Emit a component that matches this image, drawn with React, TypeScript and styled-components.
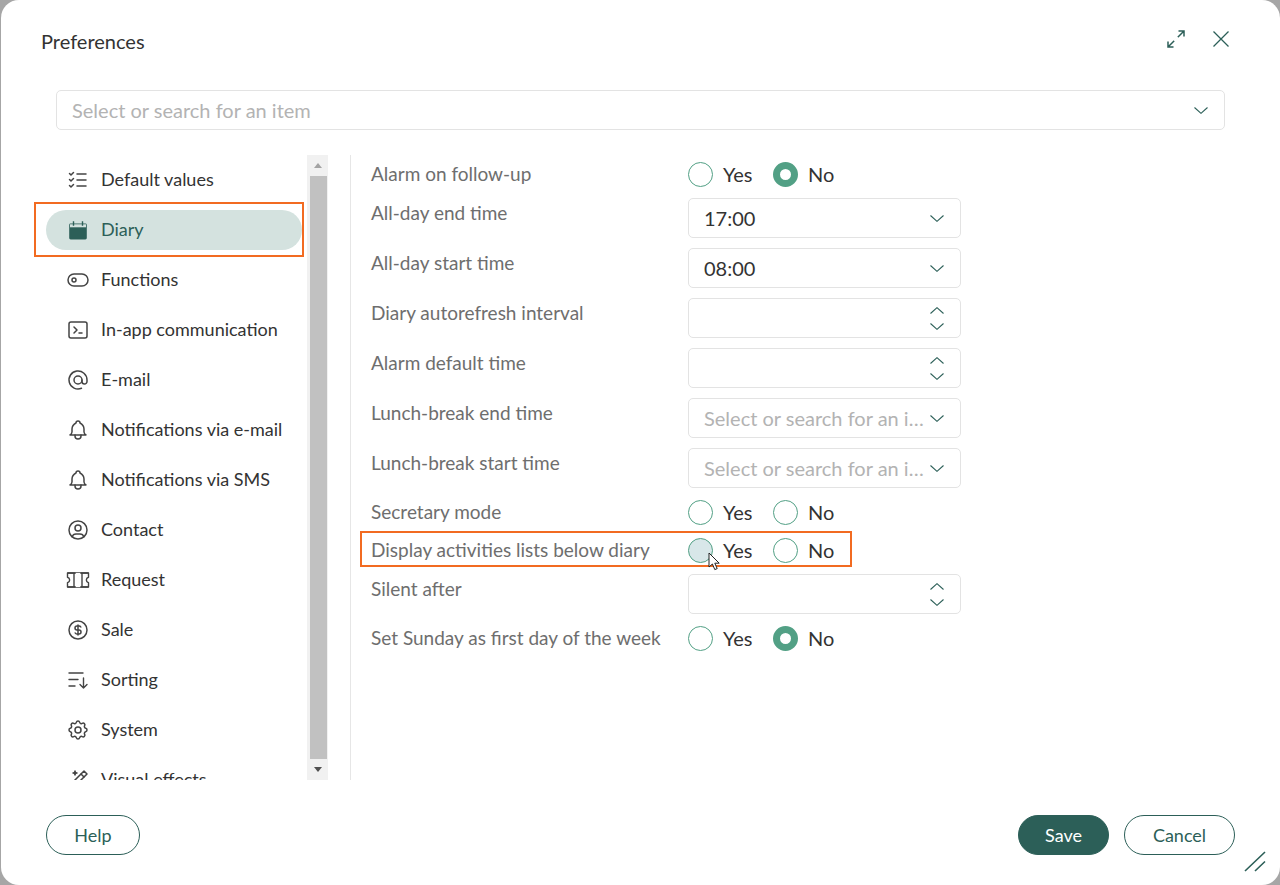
import React from "react";
import styled, { createGlobalStyle } from "styled-components";
import {
  TbListCheck, TbToggleLeft, TbTerminal2, TbAt, TbBell, TbUserCircle, TbCoin, TbSettings, TbWand,
} from "react-icons/tb";

const Global = createGlobalStyle`
  html, body { margin: 0; padding: 0; height: 100%; background: #a6a6a6; overflow: hidden; }
  * { box-sizing: border-box; }
  body { font-family: "Lato", "Liberation Sans", sans-serif; }
`;

const teal = "#2c5f58";
const orange = "#f26b21";

const Page = styled.div`
  width: 1280px;
  height: 885px;
  padding-left: 1px;
`;
const Modal = styled.div`
  width: 1279px;
  height: 885px;
  background: #fff;
  border-radius: 18px;
  display: flex;
  flex-direction: column;
`;
const Header = styled.div`
  height: 90px;
  flex: none;
  display: flex;
  align-items: flex-start;
  justify-content: space-between;
  padding: 26px 50px 0 40px;
`;
const Title = styled.div`
  font-size: 20px;
  line-height: 30px;
  color: #333;
`;
const HeaderIcons = styled.div`
  display: flex;
  gap: 26px;
  align-items: center;
  height: 26px;
`;
const IconButton = styled.span`
  display: flex;
  color: ${teal};
`;
const SearchRow = styled.div`
  flex: none;
  padding: 0 55px;
`;
const Field = styled.div<{ $full?: boolean }>`
  height: 40px;
  width: ${(p) => (p.$full ? "100%" : "273px")};
  border: 1px solid #e3e3e3;
  border-radius: 5px;
  background: #fff;
  display: flex;
  align-items: center;
  padding: 0 16px 0 15px;
`;
const FieldText = styled.span<{ $placeholder?: boolean }>`
  flex: 1;
  min-width: 0;
  font-size: 20px;
  line-height: 40px;
  color: ${(p) => (p.$placeholder ? "#b3b3b3" : "#333")};
  white-space: nowrap;
  overflow: hidden;
  text-overflow: ellipsis;
`;
const Stepper = styled.span`
  margin-left: auto;
  display: flex;
  flex-direction: column;
  gap: 9px;
  color: ${teal};
`;
const Chevron = styled.svg`
  display: block;
  flex: none;
  color: ${teal};
`;
const Body = styled.div`
  flex: none;
  height: 625px;
  margin-top: 25px;
  display: flex;
`;
const Nav = styled.nav`
  width: 306px;
  flex: none;
  height: 100%;
  overflow: hidden;
  padding: 5px 5px 0 45px;
`;
const NavItem = styled.div<{ $active?: boolean }>`
  position: relative;
  height: 40px;
  margin-bottom: 10px;
  border-radius: 20px;
  display: flex;
  align-items: center;
  gap: 11px;
  padding-left: 20px;
  font-size: 18px;
  color: ${(p) => (p.$active ? teal : "#333")};
  background: ${(p) => (p.$active ? "#d4e2df" : "transparent")};
  & > svg { flex: none; color: ${(p) => (p.$active ? teal : "#444")}; }
`;
const NavLabel = styled.span`
  position: relative;
  top: -1px;
`;
const Highlight = styled.span`
  position: absolute;
  border: 2px solid ${orange};
  pointer-events: none;
`;
const DiaryHighlight = styled(Highlight)`
  left: -12px;
  top: -8px;
  width: 270px;
  height: 55px;
`;
const Scrollbar = styled.div`
  width: 21px;
  flex: none;
  height: 100%;
  background: #f1f1f1;
  display: flex;
  flex-direction: column;
  align-items: center;
`;
const ScrollButton = styled.div`
  height: 21px;
  flex: none;
  display: flex;
  align-items: center;
  justify-content: center;
`;
const Arrow = styled.span<{ $down?: boolean }>`
  width: 0;
  height: 0;
  border-left: 4.5px solid transparent;
  border-right: 4.5px solid transparent;
  ${(p) => (p.$down ? "border-top: 5px solid #505050;" : "border-bottom: 5px solid #a3a3a3;")}
`;
const Thumb = styled.div`
  width: 17px;
  flex: 1;
  margin-left: 1px;
  background: #c1c1c1;
`;
const Divider = styled.div`
  width: 1px;
  flex: none;
  height: 100%;
  margin-left: 22px;
  background: #e6e6e6;
`;
const Form = styled.div`
  flex: 1;
  padding: 5px 0 0 20px;
  display: flex;
  flex-direction: column;
  gap: 10px;
`;
const Row = styled.div<{ $radio?: boolean }>`
  position: relative;
  display: grid;
  grid-template-columns: 317px 273px;
  height: ${(p) => (p.$radio ? "28px" : "40px")};
  align-items: ${(p) => (p.$radio ? "center" : "start")};
`;
const RowLabel = styled.div<{ $radio?: boolean }>`
  font-size: 19px;
  line-height: ${(p) => (p.$radio ? "28px" : "30px")};
  color: #6e6e6e;
  white-space: nowrap;
`;
const RowHighlight = styled(Highlight)`
  left: -11px;
  top: -5px;
  width: 492px;
  height: 36px;
`;
const RadioGroup = styled.div`
  display: flex;
  align-items: center;
`;
const RadioOption = styled.label`
  display: flex;
  align-items: center;
  font-size: 20px;
  color: #333;
  width: 85px;
  gap: 10px;
`;
const RadioDot = styled.span<{ $checked?: boolean; $hover?: boolean }>`
  position: relative;
  width: 25px;
  height: 25px;
  flex: none;
  border-radius: 50%;
  background: ${(p) => (p.$hover ? "#d8e7e9" : "#fff")};
  border: ${(p) => (p.$checked ? "7.5px" : "1px")} solid #52a085;
`;
const Cursor = styled.svg`
  position: absolute;
  left: 19px;
  top: 13px;
`;
const Footer = styled.div`
  flex: none;
  height: 105px;
  padding: 35px 45px 0;
  display: flex;
  align-items: flex-start;
  gap: 15px;
  position: relative;
`;
const Btn = styled.button<{ $primary?: boolean; $w: number }>`
  width: ${(p) => p.$w}px;
  height: 40px;
  border-radius: 20px;
  border: 1px solid ${teal};
  background: ${(p) => (p.$primary ? teal : "#fff")};
  color: ${(p) => (p.$primary ? "#fff" : teal)};
  font-family: inherit;
  font-size: 18px;
  padding: 0;
`;
const Spacer = styled.div`
  flex: 1;
`;
const Grip = styled.svg`
  position: absolute;
  right: 12px;
  bottom: 12px;
  color: ${teal};
`;

const Down = ({ w = 14, h = 7 }: { w?: number; h?: number }) => (
  <Chevron width={w} height={h} viewBox={`0 0 ${w} ${h}`} fill="none" stroke="currentColor" strokeWidth="1.1">
    <path d={`M0.5 0.5 L${w / 2} ${h - 0.7} L${w - 0.5} 0.5`} />
  </Chevron>
);
const Up = () => (
  <Chevron width={14} height={7} viewBox="0 0 14 7" fill="none" stroke="currentColor" strokeWidth="1.1">
    <path d="M0.5 6.5 L7 0.7 L13.5 6.5" />
  </Chevron>
);

const CalendarFilled = () => (
  <svg width="24" height="24" viewBox="0 0 24 24">
    <rect x="3.2" y="5.5" width="17.6" height="16" rx="1.4" fill={teal} />
    <rect x="4" y="6.3" width="16" height="3" fill="#d4e2df" />
    <path d="M7.5 3.2v4.5M16.5 3.2v4.5" stroke={teal} strokeWidth="1.4" fill="none" />
  </svg>
);
const TicketIcon = () => (
  <svg width="24" height="24" viewBox="0 0 24 24" fill="none" stroke="currentColor" strokeWidth="1.4" strokeLinejoin="round">
    <path d="M1.5 5h21v4.2a2.9 2.9 0 0 0 0 5.6V19h-21v-4.2a2.9 2.9 0 0 0 0-5.6z" />
    <path d="M8 5v14" />
    <path d="M16 5v14" />
    <path d="M12 5v14" stroke="#fff" strokeWidth="5" opacity="1" />
    <path d="M1.5 5h8M14.5 5h8M1.5 19h8M14.5 19h8" />
  </svg>
);
const SortIcon = () => (
  <svg width="24" height="24" viewBox="0 0 24 24" fill="none" stroke="currentColor" strokeWidth="1.4" strokeLinecap="round" strokeLinejoin="round">
    <path d="M3 5h14M3 11.5h9M3 18h6" />
    <path d="M17.5 10v10M14 16.5l3.5 3.5 3.5-3.5" />
  </svg>
);

const items: { label: string; icon: React.ReactNode; active?: boolean }[] = [
  { label: "Default values", icon: <TbListCheck size={24} strokeWidth={1.5} /> },
  { label: "Diary", icon: <CalendarFilled />, active: true },
  { label: "Functions", icon: <TbToggleLeft size={24} strokeWidth={1.5} /> },
  { label: "In-app communication", icon: <TbTerminal2 size={24} strokeWidth={1.5} /> },
  { label: "E-mail", icon: <TbAt size={24} strokeWidth={1.5} /> },
  { label: "Notifications via e-mail", icon: <TbBell size={24} strokeWidth={1.5} /> },
  { label: "Notifications via SMS", icon: <TbBell size={24} strokeWidth={1.5} /> },
  { label: "Contact", icon: <TbUserCircle size={24} strokeWidth={1.5} /> },
  { label: "Request", icon: <TicketIcon /> },
  { label: "Sale", icon: <TbCoin size={24} strokeWidth={1.5} /> },
  { label: "Sorting", icon: <SortIcon /> },
  { label: "System", icon: <TbSettings size={24} strokeWidth={1.5} /> },
  { label: "Visual effects", icon: <TbWand size={24} strokeWidth={1.5} /> },
];

const RadioRow = ({ label, checked, hover, marked }: { label: string; checked?: boolean; hover?: boolean; marked?: boolean }) => (
  <Row $radio>
    {marked && <RowHighlight />}
    <RowLabel $radio>{label}</RowLabel>
    <RadioGroup>
      <RadioOption>
        <RadioDot $hover={hover}>
          {hover && (
            <Cursor width="14" height="20" viewBox="0 0 14 20">
              <path d="M1 1v14l3.4-3 2.4 5.6 2.4-1-2.4-5.4h4.4z" fill="#fff" stroke="#222" strokeWidth="1" strokeLinejoin="round" />
            </Cursor>
          )}
        </RadioDot>
        Yes
      </RadioOption>
      <RadioOption>
        <RadioDot $checked={checked} />
        No
      </RadioOption>
    </RadioGroup>
  </Row>
);

const SelectRow = ({ label, value, placeholder }: { label: string; value?: string; placeholder?: string }) => (
  <Row>
    <RowLabel>{label}</RowLabel>
    <Field>
      <FieldText $placeholder={!!placeholder}>{value ?? placeholder}</FieldText>
      <Down />
    </Field>
  </Row>
);

const SpinRow = ({ label }: { label: string }) => (
  <Row>
    <RowLabel>{label}</RowLabel>
    <Field>
      <Stepper>
        <Up />
        <Down />
      </Stepper>
    </Field>
  </Row>
);

export default function App() {
  return (
    <Page>
      <Global />
      <Modal>
        <Header>
          <Title>Preferences</Title>
          <HeaderIcons>
            <IconButton>
              <svg width="20" height="20" viewBox="0 0 20 20" fill="none" stroke="currentColor" strokeWidth="1.5">
                <path d="M18 2L2 18M12.5 2H18V7.5M2 12.5V18H7.5" strokeDasharray="none" />
                <path d="M8.2 11.8L11.8 8.2" stroke="#fff" strokeWidth="2.5" />
              </svg>
            </IconButton>
            <IconButton>
              <svg width="18" height="18" viewBox="0 0 18 18" fill="none" stroke="currentColor" strokeWidth="1.3">
                <path d="M1.5 1.5L16.5 16.5M16.5 1.5L1.5 16.5" />
              </svg>
            </IconButton>
          </HeaderIcons>
        </Header>
        <SearchRow>
          <Field $full>
            <FieldText $placeholder>Select or search for an item</FieldText>
            <Down />
          </Field>
        </SearchRow>
        <Body>
          <Nav>
            {items.map((it) => (
              <NavItem key={it.label} $active={it.active}>
                {it.active && <DiaryHighlight />}
                {it.icon}
                <NavLabel>{it.label}</NavLabel>
              </NavItem>
            ))}
          </Nav>
          <Scrollbar>
            <ScrollButton><Arrow /></ScrollButton>
            <Thumb />
            <ScrollButton><Arrow $down /></ScrollButton>
          </Scrollbar>
          <Divider />
          <Form>
            <RadioRow label="Alarm on follow-up" checked />
            <SelectRow label="All-day end time" value="17:00" />
            <SelectRow label="All-day start time" value="08:00" />
            <SpinRow label="Diary autorefresh interval" />
            <SpinRow label="Alarm default time" />
            <SelectRow label="Lunch-break end time" placeholder="Select or search for an item" />
            <SelectRow label="Lunch-break start time" placeholder="Select or search for an item" />
            <RadioRow label="Secretary mode" />
            <RadioRow label="Display activities lists below diary" hover marked />
            <SpinRow label="Silent after" />
            <RadioRow label="Set Sunday as first day of the week" checked />
          </Form>
        </Body>
        <Footer>
          <Btn $w={94}>Help</Btn>
          <Spacer />
          <Btn $primary $w={91}>Save</Btn>
          <Btn $w={111}>Cancel</Btn>
          <Grip width="24" height="22" viewBox="0 0 24 22" fill="none" stroke="currentColor" strokeWidth="1.6">
            <path d="M1 20L21 1M11 20L21 10.5" />
          </Grip>
        </Footer>
      </Modal>
    </Page>
  );
}
